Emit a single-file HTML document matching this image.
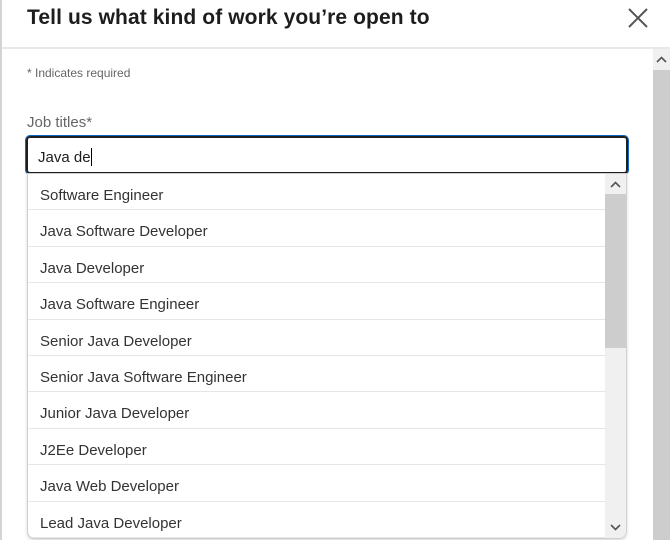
<!DOCTYPE html>
<html><head><style>
*{margin:0;padding:0;box-sizing:border-box}
body{width:670px;height:540px;overflow:hidden;background:#fff;font-family:"Liberation Sans","DejaVu Sans",sans-serif;position:relative}
.lb{position:absolute;left:0;top:0;width:2px;height:540px;background:#d4d4d4}
.title{position:absolute;left:27px;top:6px;font-size:21px;font-weight:bold;color:#1d1d1d;letter-spacing:0.1px}
.x{position:absolute;left:627px;top:7px}
.hr{position:absolute;left:2px;top:47px;width:668px;height:2px;background:#e8e8e8}
.req{position:absolute;left:27px;top:66px;font-size:12px;color:#666}
.lab{position:absolute;left:27px;top:114px;font-size:15px;color:#666}
.inp{position:absolute;left:26px;top:136px;width:602px;height:38px;border:2px solid #1f1f1f;border-radius:4px;box-shadow:0 0 0 1px #0a66c2;font-size:15px;color:#1d1d1d;padding:10px 10px}
.caret{display:inline-block;width:1px;height:18px;background:#000;vertical-align:-4px}
.dd{position:absolute;left:27px;top:173px;width:600px;height:366px;border:1px solid #d0d0d0;border-radius:0 0 8px 8px;overflow:hidden;box-shadow:0 2px 3px rgba(0,0,0,.15);background:#fff}
.row{height:36.4px;border-bottom:1px solid #e6e6e6;font-size:15px;color:#333;padding:13px 0 0 12px;width:578px}
.sb{position:absolute;right:0;top:0;width:21px;height:100%;background:#f0f0f0}
.th{position:absolute;left:0;top:20px;width:21px;height:154px;background:#cdcdcd}
.osb{position:absolute;left:653px;top:49px;width:17px;height:491px;background:#cdcdcd}
.osbt{position:absolute;left:0;top:0;width:17px;height:21px;background:#f0f0f0}
</style></head><body>
<div class="lb"></div>
<div class="title">Tell us what kind of work you’re open to</div>
<svg class="x" width="22" height="22" viewBox="0 0 22 22"><path d="M2 2L20 20M20 2L2 20" stroke="#555" stroke-width="2"/></svg>
<div class="hr"></div>
<div class="osb"><div class="osbt"><svg width="17" height="21"><path d="M4 13L8.5 8.5L13 13" stroke="#555" stroke-width="1.6" fill="none"/></svg></div></div>
<div class="req">* Indicates required</div>
<div class="lab">Job titles*</div>
<div class="inp">Java de<span class="caret"></span></div>
<div class="dd">
<div class="row">Software Engineer</div>
<div class="row">Java Software Developer</div>
<div class="row">Java Developer</div>
<div class="row">Java Software Engineer</div>
<div class="row">Senior Java Developer</div>
<div class="row">Senior Java Software Engineer</div>
<div class="row">Junior Java Developer</div>
<div class="row">J2Ee Developer</div>
<div class="row">Java Web Developer</div>
<div class="row">Lead Java Developer</div>
<div class="sb"><svg width="21" height="20" style="position:absolute;top:0;left:0"><path d="M6 13L10.5 8.5L15 13" stroke="#555" stroke-width="1.6" fill="none"/></svg><div class="th"></div><svg width="21" height="20" style="position:absolute;bottom:0;left:0"><path d="M6 7L10.5 11.5L15 7" stroke="#555" stroke-width="1.6" fill="none"/></svg></div>
</div>
</body></html>
